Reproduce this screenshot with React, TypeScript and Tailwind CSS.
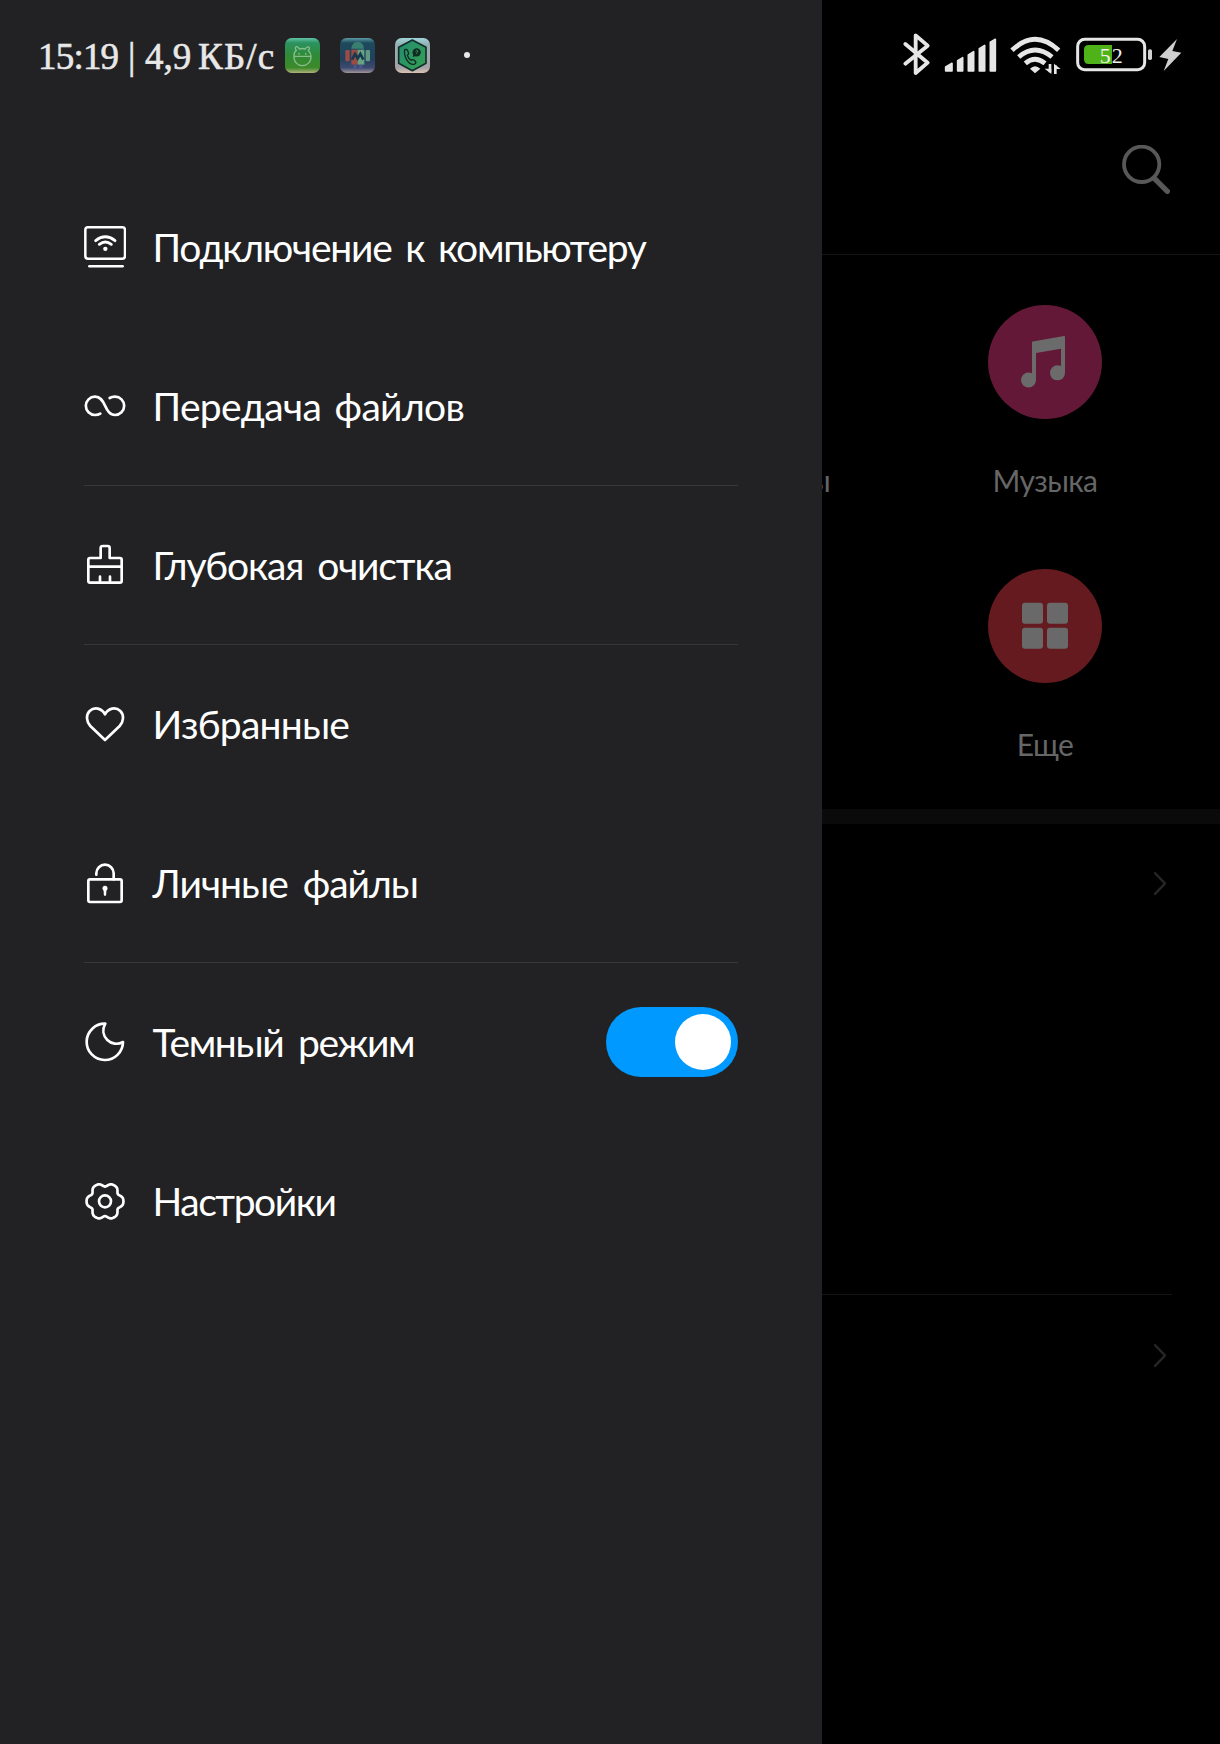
import type { ReactNode } from "react";

/* ---------- Menu icons ---------- */

function MenuIcon({ box, children }: { box: string; children: ReactNode }) {
  return (
    <svg
      viewBox={box}
      className="-mt-[2px] h-[43px] w-[42px] shrink-0"
      fill="none"
      stroke="#fff"
      strokeWidth="8"
      strokeLinecap="round"
      strokeLinejoin="round"
    >
      {children}
    </svg>
  );
}

const ComputerIcon = () => (
  <MenuIcon box="42 45 126 129">
    <rect x="46" y="52" width="119" height="94" rx="8" strokeWidth="7.5" />
    <path d="M58 169H158" strokeWidth="7.5" />
    <path d="M77 92Q106 69 135 92M88 103Q106 89 124 103" strokeWidth="8.5" />
    <circle cx="106" cy="116.500" r="6.500" fill="#fff" stroke="none" />
  </MenuIcon>
);

const TransferIcon = () => (
  <MenuIcon box="42 522 126 129">
    <path d="M91 611C86 614 80 615 75 615A27.500 27.500 0 0 1 75 560C91 560 98 572 105 587C112 602 119 615 135 615A27.500 27.500 0 0 0 135 560C129 560 124 561 119 564" />
  </MenuIcon>
);

const BrushIcon = () => (
  <MenuIcon box="42 39 126 129">
    <path d="M92 84V54Q92 48 98 48H113Q119 48 119 54V84H150Q155 84 155 89V153Q155 158 150 158H60Q55 158 55 153V89Q55 84 60 84ZM55 110H155M90 140V157M120 140V157" />
  </MenuIcon>
);

const HeartIcon = () => (
  <MenuIcon box="42 516 126 129">
    <path d="M105 630L61 588C49 575 47 555 59 543C73 530 95 534 105 553C115 534 137 530 151 543C163 555 161 575 149 588Z" />
  </MenuIcon>
);

const LockIcon = () => (
  <MenuIcon box="42 33 126 129">
    <rect x="55" y="88" width="100" height="68" rx="5" />
    <path d="M79 74V70A26 26 0 0 1 131 70V88" />
    <circle cx="105" cy="115" r="7.500" fill="#fff" stroke="none" />
    <path d="M102.500 115H107.500L106.500 135H103.500Z" fill="#fff" strokeWidth="4" />
  </MenuIcon>
);

const MoonIcon = () => (
  <MenuIcon box="42 510 126 129">
    <path d="M106 521A54.500 54.500 0 1 0 159 576C143 585 124 582 112 570C99 557 96 538 106 521Z" />
  </MenuIcon>
);

const gearPath =
  Array.from({ length: 120 }, (_, i) => {
    const a = (i / 120) * Math.PI * 2;
    const r = 51 + 5.5 * Math.cos(6 * a) - 1.2 * Math.cos(12 * a);
    return `${i ? "L" : "M"}${(105 + r * Math.cos(a)).toFixed(2)} ${(124 + r * Math.sin(a)).toFixed(2)}`;
  }).join("") + "Z";

const GearIcon = () => (
  <MenuIcon box="42 57 126 129">
    <path d={gearPath} />
    <circle cx="105" cy="124" r="18" />
  </MenuIcon>
);

/* ---------- Status bar ---------- */

function GreenAppIcon() {
  return (
    <svg viewBox="0 0 105 105" className="size-[35px]">
      <defs>
        <linearGradient id="ga" x1="0" y1="0" x2="0" y2="1">
          <stop offset="0" stopColor="#5fc4a4" />
          <stop offset=".14" stopColor="#2b9160" />
          <stop offset=".5" stopColor="#2f8a36" />
          <stop offset=".85" stopColor="#3d8a2a" />
          <stop offset="1" stopColor="#b3b07c" />
        </linearGradient>
      </defs>
      <rect width="105" height="105" rx="20" fill="url(#ga)" />
      <g fill="none" stroke="#86bd8b" strokeWidth="4">
        <path d="M27 55H78C79 72 66 83 52 83C38 83 26 72 27 55Q26 44 34 37Q28 30 34 26Q40 25 43 33Q52 30 61 33Q65 25 71 27Q76 31 70 38Q78 45 78 55" />
        <path d="M42 45V50M62 45V50" />
      </g>
    </svg>
  );
}

function RobotAppIcon() {
  return (
    <svg viewBox="0 0 105 105" className="size-[35px]">
      <defs>
        <linearGradient id="gb" x1="0" y1="0" x2="0" y2="1">
          <stop offset="0" stopColor="#5b9aa5" />
          <stop offset=".14" stopColor="#1d4a5c" />
          <stop offset=".6" stopColor="#22405c" />
          <stop offset=".85" stopColor="#3d4a70" />
          <stop offset="1" stopColor="#a3949c" />
        </linearGradient>
      </defs>
      <rect width="105" height="105" rx="20" fill="url(#gb)" />
      <path d="M34 32A19 21 0 0 1 72 32Z" fill="#397f70" />
      <path d="M34 35H53V80H34Z" fill="#9c4a44" />
      <path d="M53 35H73V80H53Z" fill="#67a383" />
      <rect x="16" y="36" width="13" height="34" rx="4" fill="#9c4b45" />
      <rect x="77" y="36" width="13" height="34" rx="4" fill="#609a83" />
      <path d="M40 80H50V94H40ZM57 80H67V94H57Z" fill="#4a578c" />
      <path d="M36 65L45 48L53 61L61 48L70 65" fill="none" stroke="#17394d" strokeWidth="8" />
    </svg>
  );
}

function PhoneAppIcon() {
  return (
    <svg viewBox="0 0 105 105" className="size-[35px]">
      <defs>
        <linearGradient id="gc" x1="0" y1="0" x2="0" y2="1">
          <stop offset="0" stopColor="#9fd5da" />
          <stop offset=".2" stopColor="#93aeb2" />
          <stop offset=".85" stopColor="#a5a3a6" />
          <stop offset="1" stopColor="#dcc3b5" />
        </linearGradient>
        <linearGradient id="gd" x1="0" y1="0" x2="1" y2="1">
          <stop offset="0" stopColor="#238c70" />
          <stop offset="1" stopColor="#36a052" />
        </linearGradient>
      </defs>
      <rect width="105" height="105" rx="20" fill="url(#gc)" />
      <path d="M52 6L93 28V76L52 98L11 76V28Z" fill="url(#gd)" stroke="#122f2c" strokeWidth="5" strokeLinejoin="round" />
      <path d="M29 35Q35 32 38 38L41 46Q41 50 37 52Q40 62 49 67Q53 63 57 66L62 71Q64 76 57 79C42 82 25 57 29 35Z" fill="none" stroke="#102c22" strokeWidth="4" />
      <circle cx="65" cy="43" r="12.500" fill="#102c22" />
      <path d="M53 57L56 46L63 54Z" fill="#102c22" />
      <path d="M62 40Q65 35 68 39Q69 42 65 44V47" fill="none" stroke="#3a9a68" strokeWidth="3" />
    </svg>
  );
}

function StatusLeft() {
  return (
    <div className="flex h-[110px] items-center pl-[38px]">
      <div className="mt-[2px] flex w-[247px] items-center font-['Liberation_Serif',serif] text-[37px] leading-none whitespace-nowrap text-[#e8e8e8] [-webkit-text-stroke:0.6px_#e8e8e8]">
        <span className="w-[90px] tracking-[-0.8px]">15:19</span>
        <span className="w-[17px]">|</span>
        <span className="w-[53px]">4,9</span>
        <span className="tracking-[1.2px]">КБ/с</span>
      </div>
      <div className="flex items-center gap-[20px]">
        <GreenAppIcon />
        <RobotAppIcon />
        <PhoneAppIcon />
      </div>
      <span className="ml-[34px] size-[6px] rounded-full bg-[#e8e8e8]" />
    </div>
  );
}

function StatusRight() {
  return (
    <div className="flex h-[110px] items-center pl-[68px]">
      <svg viewBox="0 0 150 210" className="h-[70px] w-[50px]" fill="none" stroke="#e6e6e6" strokeWidth="11.500" strokeLinecap="round" strokeLinejoin="round">
        <path d="M46 72L113 128L77 159V46L113 77L46 131" />
      </svg>
      <svg viewBox="150 0 195 210" className="h-[70px] w-[65px]" fill="#e6e6e6" stroke="#e6e6e6" strokeWidth="5" strokeLinejoin="round">
        <path d="M167 141L186 130V153H167ZM203 122L218 113V153H203ZM235 105L251 95V153H235ZM268 86L284 76V153H268ZM301 67L316 58V153H301Z" />
      </svg>
      <svg viewBox="345 0 195 210" className="h-[70px] w-[65px]" fill="none" stroke="#e6e6e6" strokeWidth="14.500">
        <path d="M366 91Q435 25 506 91M386 111Q435 69 486 111M406 130Q435 105 465 130" />
        <path d="M435 160L420 146Q435 131 451 146Z" fill="#e6e6e6" stroke="none" />
        <path d="M480 132V157M496 162V136" strokeWidth="8" />
        <path d="M464 146H484V162ZM512 147H492V131Z" fill="#e6e6e6" stroke="none" />
      </svg>
      <svg viewBox="540 0 390 210" className="h-[70px] w-[130px]">
        <rect x="563" y="58" width="201" height="91" rx="21" fill="none" stroke="#e6e6e6" strokeWidth="9" />
        <path d="M596 75H666V132H596Q582 132 582 118V89Q582 75 596 75Z" fill="#4fb218" />
        <rect x="774" y="88" width="12" height="32" rx="5" fill="#d0d0d0" />
        <path d="M861 57L808 111L835 117L821 153L874 98L847 93Z" fill="#cfcfcf" />
        <text x="665" y="129" textAnchor="middle" fontFamily="Liberation Serif, serif" fontSize="66" letterSpacing="3" fill="#f0f0f0">52</text>
      </svg>
    </div>
  );
}

/* ---------- Drawer ---------- */

function Switch() {
  return (
    <button type="button" role="switch" aria-checked="true" aria-label="Темный режим" className="ml-auto flex h-[70px] w-[132px] items-center justify-end rounded-full bg-[#0099ff] pr-[7px]">
      <span className="size-[56px] rounded-full bg-white" />
    </button>
  );
}

type Item = { label: string; icon: ReactNode; style: string; divided?: boolean; control?: ReactNode };

const items: Item[] = [
  { label: "Подключение к компьютеру", icon: <ComputerIcon />, style: "tracking-[-1.25px] [word-spacing:5px]" },
  { label: "Передача файлов", icon: <TransferIcon />, style: "tracking-[-0.65px] [word-spacing:4px]" },
  { label: "Глубокая очистка", icon: <BrushIcon />, style: "tracking-[-1.15px] [word-spacing:5px]" },
  { label: "Избранные", icon: <HeartIcon />, style: "tracking-[-0.75px]" },
  { label: "Личные файлы", icon: <LockIcon />, style: "tracking-[-1px] [word-spacing:6px]" },
  { label: "Темный режим", icon: <MoonIcon />, style: "tracking-[-1.35px] [word-spacing:6px]", control: <Switch /> },
  { label: "Настройки", icon: <GearIcon />, style: "tracking-[-1.45px]" },
].map((item, i) => ({ ...item, divided: i === 2 || i === 3 || i === 5 }));

function MenuRow({ item }: { item: Item }) {
  return (
    <li className={`flex h-[159px] items-center border-t ${item.divided ? "border-[#37373a]" : "border-transparent"}`}>
      {item.icon}
      <span className={`ml-[26.5px] text-[39px] leading-[47px] whitespace-nowrap text-white ${item.style}`}>{item.label}</span>
      {item.control}
    </li>
  );
}

function Drawer() {
  return (
    <aside className="h-full w-[822px] shrink-0 bg-[#222224]">
      <StatusLeft />
      <ul className="mt-[57px] mr-[84px] ml-[84px]">
        {items.map((item) => (
          <MenuRow key={item.label} item={item} />
        ))}
      </ul>
    </aside>
  );
}

/* ---------- Dimmed page ---------- */

const Chevron = () => (
  <svg viewBox="0 0 36 68" className="h-[23px] w-[12px]" fill="none" stroke="#262626" strokeWidth="7" strokeLinecap="round">
    <path d="M3 3L33 34L3 65" />
  </svg>
);

function Category({ label, icon }: { label: string; icon: ReactNode }) {
  return (
    <div className="flex h-[264px] w-[290px] flex-col items-center">
      {icon}
      <span className="mt-[43px] text-[30px] leading-9 tracking-[-0.6px] text-[#666]">{label}</span>
    </div>
  );
}

const MusicIcon = () => (
  <svg viewBox="564 555 342 342" className="size-[114px]">
    <circle cx="735" cy="726" r="171" fill="#641838" />
    <g fill="#6b6b6b">
      <path d="M696 667Q696 665 698 664.500L792 648Q795 648 795 651V759H783V686L708 699V780H696Z" />
      <circle cx="685.500" cy="780" r="22.500" />
      <circle cx="772.500" cy="758.500" r="22.500" />
    </g>
  </svg>
);

const MoreIcon = () => (
  <svg viewBox="564 87 342 342" className="size-[114px]">
    <circle cx="735" cy="258" r="171" fill="#641a1e" />
    <g fill="#696969">
      <rect x="666" y="188" width="63" height="63" rx="9" />
      <rect x="741" y="188" width="63" height="63" rx="9" />
      <rect x="666" y="263" width="63" height="63" rx="9" />
      <rect x="741" y="263" width="63" height="63" rx="9" />
    </g>
  </svg>
);

function Page() {
  return (
    <main className="flex h-full w-[398px] flex-col bg-black">
      <StatusRight />
      <header className="flex h-[145px] justify-end border-b border-[#141414] pt-[35px] pr-[50px]">
        <svg viewBox="966 74 144 147" className="h-[49px] w-[48px]" fill="none" stroke="#585858" strokeLinecap="round">
          <circle cx="1025" cy="132" r="53" strokeWidth="11.500" />
          <path d="M1063 174L1102 213" strokeWidth="16" />
        </svg>
      </header>
      <section className="flex h-[554px] pt-[50px]">
        <div className="flex h-[264px] w-[78px] items-end overflow-hidden pb-[71px]">
          <span className="-ml-[13px] text-[30px] leading-9 text-[#666]">ы</span>
        </div>
        <div>
          <Category label="Музыка" icon={<MusicIcon />} />
          <Category label="Еще" icon={<MoreIcon />} />
        </div>
      </section>
      <div className="h-[15px] bg-[#0a0a0a]" />
      <section className="mr-[48px] flex h-[471px] justify-end border-b border-[#141414] pt-[48px] pr-[6px]">
        <Chevron />
      </section>
      <section className="mr-[48px] flex justify-end pt-[49px] pr-[6px]">
        <Chevron />
      </section>
    </main>
  );
}

export default function App() {
  return (
    <div className="flex h-[1744px] w-[1220px] overflow-hidden bg-black font-['Lato',sans-serif]">
      <Drawer />
      <Page />
    </div>
  );
}
